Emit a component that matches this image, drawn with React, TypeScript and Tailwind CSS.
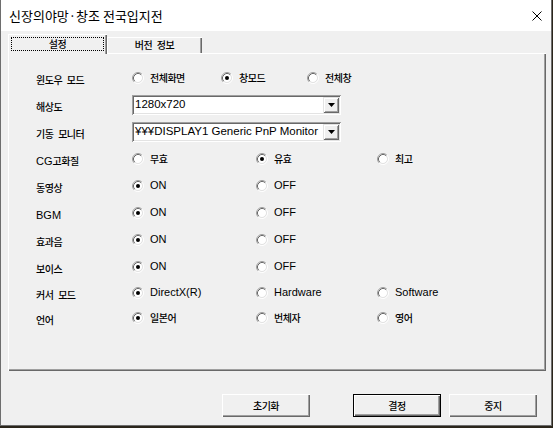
import type { ReactNode } from "react";

const KR = "font-['Noto_Sans_CJK_KR',sans-serif] text-[10px] tracking-[-0.5px] [word-spacing:3px] font-medium";
const LATIN = "font-['Liberation_Sans','Noto_Sans_CJK_KR',sans-serif] text-[11px]";

type Opt = { label: ReactNode; checked?: boolean; latin?: boolean };

function Radio({ checked }: { checked?: boolean }) {
  return (
    <svg width="12" height="12" viewBox="0 0 12 12" className="shrink-0">
      <circle cx="6" cy="6" r="4" fill="#fff" />
      <path d="M2.11 9.89A5.5 5.5 0 0 1 9.89 2.11" fill="none" stroke="#a0a0a0" />
      <path d="M9.89 2.11A5.5 5.5 0 0 1 2.11 9.89" fill="none" stroke="#ffffff" />
      <path d="M2.82 9.18A4.5 4.5 0 0 1 9.18 2.82" fill="none" stroke="#696969" />
      <path d="M9.18 2.82A4.5 4.5 0 0 1 2.82 9.18" fill="none" stroke="#e3e3e3" />
      {checked && <circle cx="6" cy="6" r="2" fill="#000" />}
    </svg>
  );
}

function Option({ opt, className }: { opt: Opt; className?: string }) {
  return (
    <div className={`flex items-center gap-[6px] ${className ?? ""}`}>
      <Radio checked={opt.checked} />
      <span className={`leading-none text-black ${opt.latin ? LATIN : KR}`}>{opt.label}</span>
    </div>
  );
}

function RadioRow({ label, opts, narrow, tall = true }: { label: ReactNode; opts: Opt[]; narrow?: boolean; tall?: boolean }) {
  return (
    <div className={`flex items-center ${tall ? "h-[27px]" : "h-[25px]"}`}>
      <div className="w-[96px] shrink-0 leading-none text-black">{label}</div>
      <Option opt={opts[0]} className={narrow ? "w-[89px]" : "w-[124px]"} />
      <Option opt={opts[1]} className={narrow ? "w-[86px]" : "w-[121px]"} />
      {opts[2] && <Option opt={opts[2]} />}
    </div>
  );
}

function Combo({ value }: { value: string }) {
  return (
    <div className="flex h-[20px] w-[209px] items-center bg-white p-[2px] shadow-[inset_1px_1px_#a0a0a0,inset_-1px_-1px_#ffffff,inset_2px_2px_#696969,inset_-2px_-2px_#e3e3e3]">
      <div className="flex-1 overflow-hidden whitespace-nowrap pl-[1px] font-['Liberation_Sans',sans-serif] text-[11.5px] leading-none text-black">
        {value}
      </div>
      <div className="flex h-[16px] w-[16px] shrink-0 items-center justify-center bg-[#f0f0f0] shadow-[inset_1px_1px_#e3e3e3,inset_-1px_-1px_#696969,inset_2px_2px_#ffffff,inset_-2px_-2px_#a0a0a0]">
        <svg width="7" height="4" viewBox="0 0 7 4">
          <path d="M0 0h7L3.5 4z" fill="#000" />
        </svg>
      </div>
    </div>
  );
}

function Btn({ children, isDefault }: { children: ReactNode; isDefault?: boolean }) {
  const raised =
    "shadow-[inset_1px_1px_#ffffff,inset_-1px_-1px_#696969,inset_-2px_-2px_#a0a0a0]";
  return (
    <div
      className={`flex h-[23px] w-[88px] items-center justify-center bg-[#f0f0f0] ${
        isDefault ? "border border-black" : ""
      }`}
    >
      <div className={`flex h-full w-full items-center justify-center ${raised}`}>
        <span className={`${KR} leading-none text-black`}>{children}</span>
      </div>
    </div>
  );
}

const kr = (s: string) => <span className={KR}>{s}</span>;

export default function App() {
  return (
    <div className="h-[428px] w-[553px] overflow-hidden bg-[#2b261c]">
      <div className="flex h-[426px] w-[552px] flex-col border-x border-b border-[#6e6e6e] bg-[#f0f0f0]">
        {/* title bar */}
        <div className="flex h-[31px] shrink-0 items-center justify-between bg-white pl-[8px] pr-[9px]">
          <span className="font-['Noto_Sans_CJK_KR',sans-serif] text-[13px] leading-none text-black">
            신장의야망·창조 전국입지전
          </span>
          <svg width="10" height="10" viewBox="0 0 10 10">
            <path d="M0.5 0.5L9.5 9.5M9.5 0.5L0.5 9.5" stroke="#000" strokeWidth="1" />
          </svg>
        </div>

        {/* tabs */}
        <div className="relative z-10 ml-[7px] mt-[3px] -mb-px flex items-end">
          <div className="h-[20px] w-[99px] bg-[#f0f0f0] pl-[3px] pt-[3px] shadow-[inset_1px_1px_#ffffff,inset_-1px_0_#696969,inset_-2px_0_#a0a0a0]">
            <div className="flex h-[14px] w-[93px] items-center justify-center border border-dotted border-black">
              <span className={`${KR} leading-none text-black`}>설정</span>
            </div>
          </div>
          <div className="mb-px flex h-[16px] w-[95px] items-center justify-center bg-[#f0f0f0] shadow-[inset_1px_1px_#ffffff,inset_-1px_0_#696969,inset_-2px_0_#a0a0a0]">
            <span className={`${KR} leading-none text-black`}>버전 정보</span>
          </div>
        </div>

        {/* panel */}
        <div className="ml-[7px] h-[318px] w-[538px] shrink-0 pl-[28px] pt-[11px] shadow-[inset_1px_1px_#ffffff,inset_-1px_-1px_#696969,inset_-2px_-2px_#a0a0a0]">
          <RadioRow
            narrow
            label={kr("윈도우 모드")}
            opts={[{ label: "전체화면" }, { label: "창모드", checked: true }, { label: "전체창" }]}
          />
          <div className="flex h-[27px] items-center">
            <div className="w-[96px] shrink-0 leading-none text-black">{kr("해상도")}</div>
            <Combo value="1280x720" />
          </div>
          <div className="flex h-[27px] items-center">
            <div className="w-[96px] shrink-0 leading-none text-black">{kr("기동 모니터")}</div>
            <Combo value="¥¥¥DISPLAY1 Generic PnP Monitor" />
          </div>
          <RadioRow
            label={
              <>
                <span className={LATIN}>CG</span>
                {kr("고화질")}
              </>
            }
            opts={[{ label: "무효" }, { label: "유효", checked: true }, { label: "최고" }]}
          />
          <RadioRow
            label={kr("동영상")}
            opts={[
              { label: "ON", checked: true, latin: true },
              { label: "OFF", latin: true },
            ]}
          />
          <RadioRow
            label={<span className={LATIN}>BGM</span>}
            opts={[
              { label: "ON", checked: true, latin: true },
              { label: "OFF", latin: true },
            ]}
          />
          <RadioRow
            label={kr("효과음")}
            opts={[
              { label: "ON", checked: true, latin: true },
              { label: "OFF", latin: true },
            ]}
          />
          <RadioRow
            label={kr("보이스")}
            opts={[
              { label: "ON", checked: true, latin: true },
              { label: "OFF", latin: true },
            ]}
          />
          <RadioRow
            tall={false}
            label={kr("커서 모드")}
            opts={[
              { label: "DirectX(R)", checked: true, latin: true },
              { label: "Hardware", latin: true },
              { label: "Software", latin: true },
            ]}
          />
          <RadioRow
            tall={false}
            label={kr("언어")}
            opts={[{ label: "일본어", checked: true }, { label: "번체자" }, { label: "영어" }]}
          />
        </div>

        {/* buttons */}
        <div className="ml-[221px] mt-[23px] flex">
          <Btn>초기화</Btn>
          <div className="ml-[43px]">
            <Btn isDefault>결정</Btn>
          </div>
          <div className="ml-[8px]">
            <Btn>중지</Btn>
          </div>
        </div>
      </div>
    </div>
  );
}
